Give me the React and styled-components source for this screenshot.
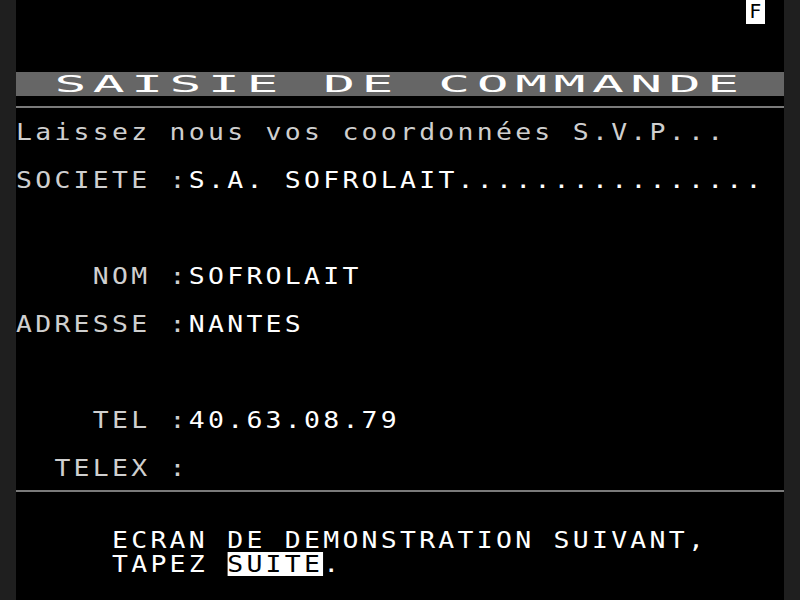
import styled, { createGlobalStyle } from 'styled-components';

const CELL = 19.2; // 768px / 40 colonnes
const FONT = 23;
const WIDEN = 1.15; // les caractères Minitel sont plus larges que la police
const SPACING = CELL / WIDEN - FONT * 0.6021;

const GlobalStyle = createGlobalStyle`
  html, body {
    margin: 0;
    padding: 0;
    background: #1f1f1f;
  }
`;

const Monitor = styled.div`
  width: 800px;
  height: 600px;
  display: flex;
  background: #1f1f1f;
`;

const Screen = styled.div`
  width: 768px;
  height: 600px;
  margin: 0 16px;
  background: #000;
  display: flex;
  flex-direction: column;
  overflow: hidden;
  font-family: 'DejaVu Sans Mono', 'Liberation Mono', monospace;
  font-size: ${FONT}px;
  letter-spacing: ${SPACING}px;
  line-height: 24px;
  white-space: pre;
`;

const Row = styled.div`
  height: 24px;
  display: flex;
  justify-content: ${(p) => (p.$right ? 'flex-end' : 'flex-start')};
  padding-right: ${(p) => (p.$right ? `${CELL}px` : 0)};
  background: ${(p) => p.$bg || 'transparent'};
`;

const Line = styled.div`
  display: flex;
  height: 24px;
  transform: scaleX(${WIDEN});
  transform-origin: left center;
`;

const Text = styled.span`
  color: ${(p) => (p.$dim ? '#cfcfcf' : '#ffffff')};
`;

const Inverse = styled.span`
  display: inline-block;
  height: 24px;
  background: #fff;
  color: #000;
`;

const StatusBox = styled.span`
  display: inline-block;
  width: ${CELL}px;
  height: 24px;
  background: #fff;
  color: #000;
  font-size: 20px;
  letter-spacing: 0;
  line-height: 22px;
  text-align: center;
`;

const Title = styled.span`
  display: inline-block;
  color: #fff;
  transform: scaleX(${2 * WIDEN});
  transform-origin: left center;
`;

const RuleRow = styled.div`
  height: 24px;
  padding-top: 10px;
  box-sizing: border-box;
`;

const Rule = styled.div`
  height: 2px;
  background: #7a7a7a;
`;

const Field = ({ label, value }) => (
  <Row>
    <Line>
      <Text $dim>{label}</Text>
      <Text>{value}</Text>
    </Line>
  </Row>
);

function App() {
  return (
    <Monitor>
      <GlobalStyle />
      <Screen>
        <Row $right>
          <StatusBox>F</StatusBox>
        </Row>
        <Row />
        <Row />
        <Row $bg="#666666">
          <Title> SAISIE DE COMMANDE</Title>
        </Row>
        <RuleRow>
          <Rule />
        </RuleRow>
        <Row>
          <Line>
            <Text $dim>Laissez nous vos coordonnées S.V.P...</Text>
          </Line>
        </Row>
        <Row />
        <Field label="SOCIETE :" value="S.A. SOFROLAIT................" />
        <Row />
        <Row />
        <Row />
        <Field label="    NOM :" value="SOFROLAIT" />
        <Row />
        <Field label="ADRESSE :" value="NANTES" />
        <Row />
        <Row />
        <Row />
        <Field label="    TEL :" value="40.63.08.79" />
        <Row />
        <Field label="  TELEX :" value="" />
        <RuleRow>
          <Rule />
        </RuleRow>
        <Row />
        <Row>
          <Line>
            <Text>     ECRAN DE DEMONSTRATION SUIVANT,</Text>
          </Line>
        </Row>
        <Row>
          <Line>
            <Text>     TAPEZ </Text>
            <Inverse>SUITE</Inverse>
            <Text>.</Text>
          </Line>
        </Row>
        <Row />
      </Screen>
    </Monitor>
  );
}

export default App;
